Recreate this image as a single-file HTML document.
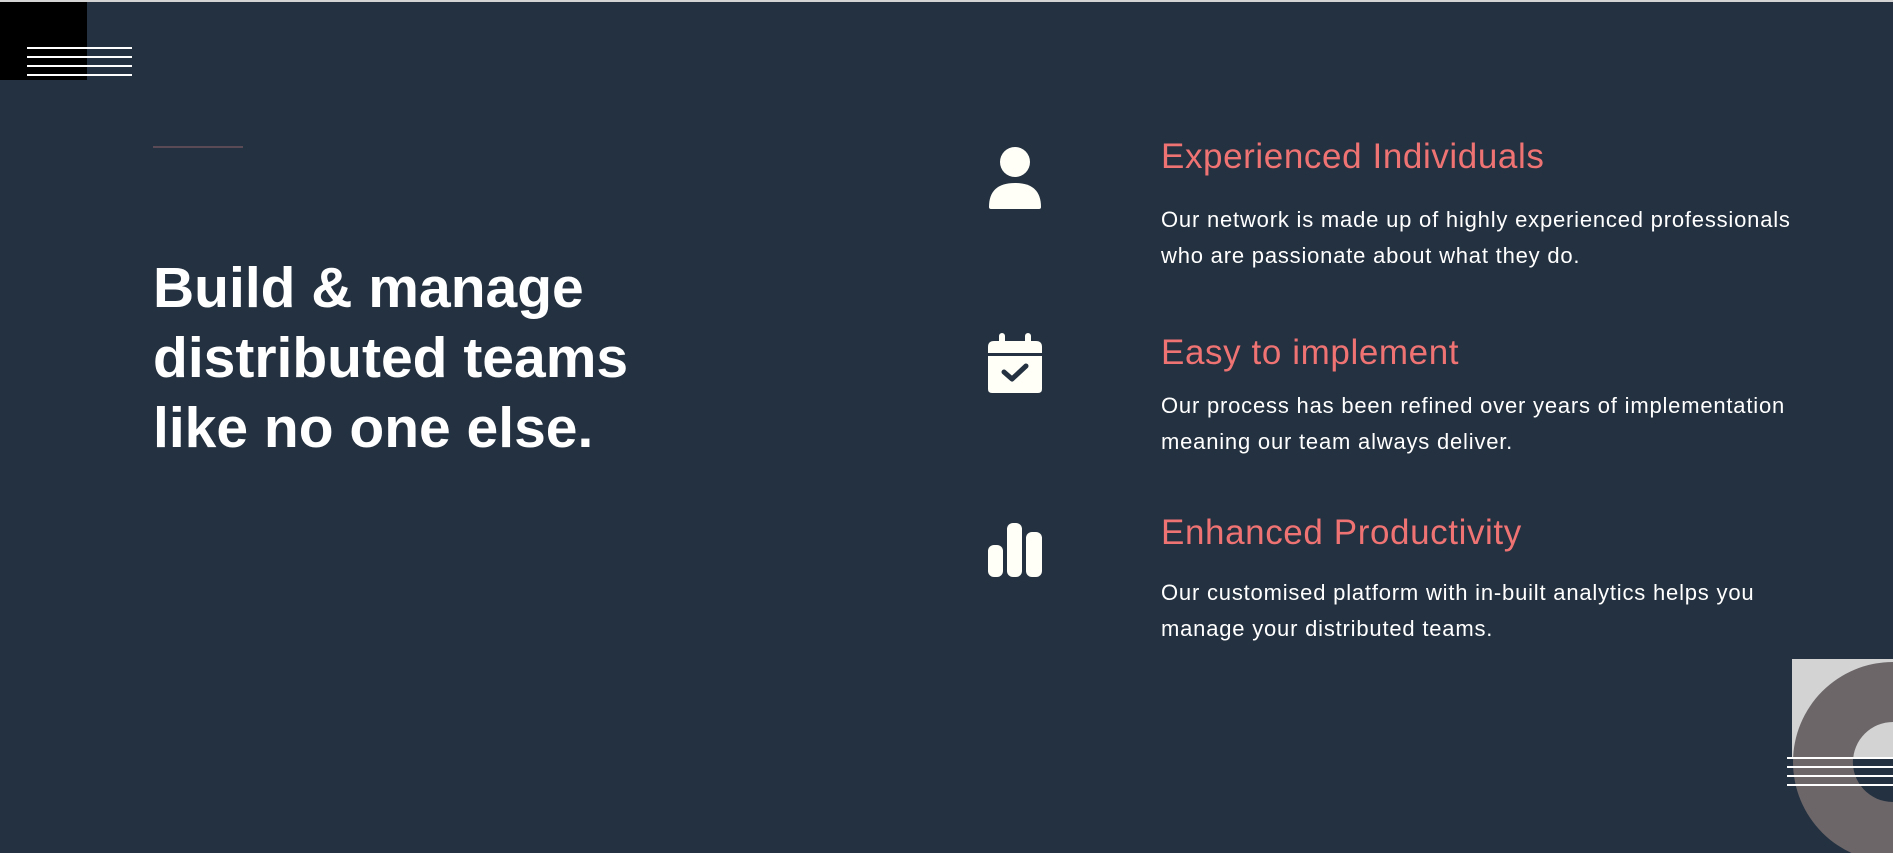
<!DOCTYPE html>
<html><head><meta charset="utf-8"><style>
html,body{margin:0;padding:0;}
body{width:1893px;height:853px;background:#243140;position:relative;overflow:hidden;font-family:"Liberation Sans",sans-serif;}
.a{position:absolute;}
.t{color:#ef7373;font-size:35px;line-height:40px;left:1161px;white-space:nowrap;letter-spacing:0.6px;}
.b{color:#fff;font-size:22px;line-height:36px;left:1161px;white-space:nowrap;letter-spacing:0.8px;}
.ln{position:absolute;height:2px;background:#fff;}
</style></head><body>
<div class="a" style="left:0;top:0;width:1893px;height:2px;background:#d4d4d4"></div>
<div class="a" style="left:0;top:2px;width:87px;height:78px;background:#000"></div>
<div class="ln" style="left:27px;top:47px;width:105px"></div>
<div class="ln" style="left:27px;top:56px;width:105px"></div>
<div class="ln" style="left:27px;top:65px;width:105px"></div>
<div class="ln" style="left:27px;top:74px;width:105px"></div>
<div class="a" style="left:153px;top:146px;width:90px;height:2px;background:#5a4a55"></div>
<div class="a" style="left:153px;top:253px;color:#fff;font-size:57px;line-height:70px;font-weight:bold;letter-spacing:0px;white-space:nowrap">Build &amp; manage<br>distributed teams<br>like no one else.</div>

<svg class="a" style="left:988px;top:147px" width="54" height="62" viewBox="0 0 54 62"><circle cx="27" cy="15" r="15" fill="#fffff8"/><path d="M1 60 Q1 36 27 36 Q53 36 53 60 Q53 62 51 62 L3 62 Q1 62 1 60Z" fill="#fffff8"/></svg>
<svg class="a" style="left:988px;top:333px" width="54" height="62" viewBox="0 0 54 62"><rect x="11" y="0" width="6" height="12" rx="3" fill="#fffff8"/><rect x="37" y="0" width="6" height="12" rx="3" fill="#fffff8"/><path d="M0 14 Q0 8 6 8 L48 8 Q54 8 54 14 L54 20 L0 20Z" fill="#fffff8"/><path d="M0 23 L54 23 L54 56 Q54 60 50 60 L4 60 Q0 60 0 56Z" fill="#fffff8"/><path d="M16 39 L24 46 L38 33" stroke="#243140" stroke-width="5" fill="none" stroke-linecap="round" stroke-linejoin="round"/></svg>
<svg class="a" style="left:988px;top:523px" width="54" height="54" viewBox="0 0 54 54"><rect x="0" y="22" width="15" height="32" rx="6" fill="#fffff8"/><rect x="19" y="0" width="15" height="54" rx="6" fill="#fffff8"/><rect x="38" y="9" width="16" height="45" rx="6" fill="#fffff8"/></svg>

<div class="a t" style="top:137px">Experienced Individuals</div>
<div class="a b" style="top:202px">Our network is made up of highly experienced professionals<br>who are passionate about what they do.</div>
<div class="a t" style="top:333px">Easy to implement</div>
<div class="a b" style="top:388px">Our process has been refined over years of implementation<br>meaning our team always deliver.</div>
<div class="a t" style="top:513px">Enhanced Productivity</div>
<div class="a b" style="top:575px">Our customised platform with in-built analytics helps you<br>manage your distributed teams.</div>

<svg class="a" style="left:1780px;top:650px" width="113" height="203" viewBox="0 0 113 203">
<rect x="12" y="9" width="101" height="100" fill="#d3d3d3"/>
<circle cx="113" cy="112" r="100" fill="#6c6669"/>
<path d="M113 72 A40 40 0 0 0 73 112 L113 112Z" fill="#d3d3d3"/>
<path d="M73 109 A40 40 0 0 0 113 152 L113 109Z" fill="#243140"/>
<rect x="7" y="107" width="106" height="2" fill="#fff"/>
<rect x="7" y="116" width="106" height="2" fill="#fff"/>
<rect x="7" y="125" width="106" height="2" fill="#fff"/>
<rect x="7" y="134" width="106" height="2" fill="#fff"/>
</svg>
</body></html>
